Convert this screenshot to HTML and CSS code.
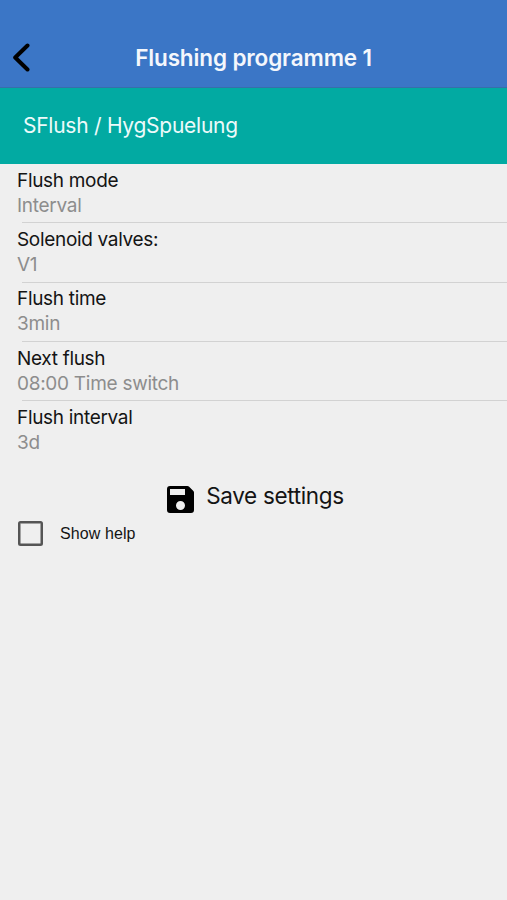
FILE: index.html
```html
<!DOCTYPE html>
<html lang="en">
<head>
<meta charset="utf-8">
<title>Flushing programme 1</title>
<link rel="stylesheet" href="styles.css">
</head>
<body>
<header class="nav">
  <svg class="back" viewBox="0 0 20 30"><path d="M15.500 3.500 3.200 15.500 15.500 27.500"/></svg>
  <h1 class="title"><span>Flushing programme 1</span></h1>
</header>
<div class="device"><span>SFlush / HygSpuelung</span></div>
<main>
  <dl class="list">
    <div class="row"><dt><span>Flush mode</span></dt><dd><span>Interval</span></dd></div>
    <div class="row"><dt><span>Solenoid valves:</span></dt><dd><span>V1</span></dd></div>
    <div class="row"><dt><span>Flush time</span></dt><dd><span>3min</span></dd></div>
    <div class="row"><dt><span>Next flush</span></dt><dd><span>08:00 Time switch</span></dd></div>
    <div class="row"><dt><span>Flush interval</span></dt><dd><span>3d</span></dd></div>
  </dl>
  <div class="save">
    <svg class="disk" viewBox="3 3 18 18"><path d="M16.600 3H5a2 2 0 0 0-2 2v14a2 2 0 0 0 2 2h14a2 2 0 0 0 2-2V7.400q0-.6-.4-1L17.600 3.400q-.4-.4-1-.4zM12 19a3 3 0 1 1 0-6 3 3 0 0 1 0 6zm3-10H5V5h10v4z"/></svg>
    <span>Save settings</span>
  </div>
  <label class="help"><i class="box"></i><span>Show help</span></label>
</main>
</body>
</html>
```
FILE: styles.css
```css
* { box-sizing: border-box; }
body { margin: 0; height: 900px; background: #efefef; color: #141414; font-family: Inter, "Liberation Sans", sans-serif; overflow: hidden; }
.nav { height: 88px; padding: 42px 12px 0; display: grid; grid-template-columns: 20px 1fr 20px; background: #3b76c6; border-bottom: 1px solid #376fa9; }
.back { width: 20px; height: 30px; fill: none; stroke: #000; stroke-width: 4; stroke-linecap: round; stroke-linejoin: round; }
.title { margin: 0; font-size: 22.5px; line-height: 31px; font-weight: 600; letter-spacing: -0.13px; color: #f4f7fc; text-align: center; white-space: nowrap; }
.device { height: 76px; padding: 0 0 1px 23px; display: flex; align-items: center; background: #02aaa2; color: #edfafa; font-size: 21px; letter-spacing: -0.26px; }
.list { margin: 0; }
.row { height: 59.3px; padding: 4px 0 0 17px; background: linear-gradient(#d2d2d2, #d2d2d2) 22px 100% / 100% 1px no-repeat; }
.row:nth-child(3) { padding-top: 3.4px; }
.row:last-child { background: none; }
dt, dd { margin: 0; font-size: 19px; line-height: 25px; letter-spacing: -0.32px; }
dd { color: #8d8d8d; letter-spacing: -0.28px; }
.save { display: flex; justify-content: center; align-items: center; gap: 12px; height: 36px; margin-top: 18px; padding-left: 4px; font-size: 22.5px; letter-spacing: -0.33px; }
.save span { padding-bottom: 2px; }
.disk { width: 27px; height: 27px; margin-top: 6px; }
.help { display: flex; align-items: center; gap: 17px; height: 30px; margin-top: 4px; padding-left: 18px; font: 16px "Liberation Sans", sans-serif; letter-spacing: 0.1px; }
.help span { padding-top: 1px; }
.box { width: 25px; height: 25px; border: 2.5px solid #555; border-radius: 2.5px; box-shadow: inset 0 0 0 0.5px #555; }
```
